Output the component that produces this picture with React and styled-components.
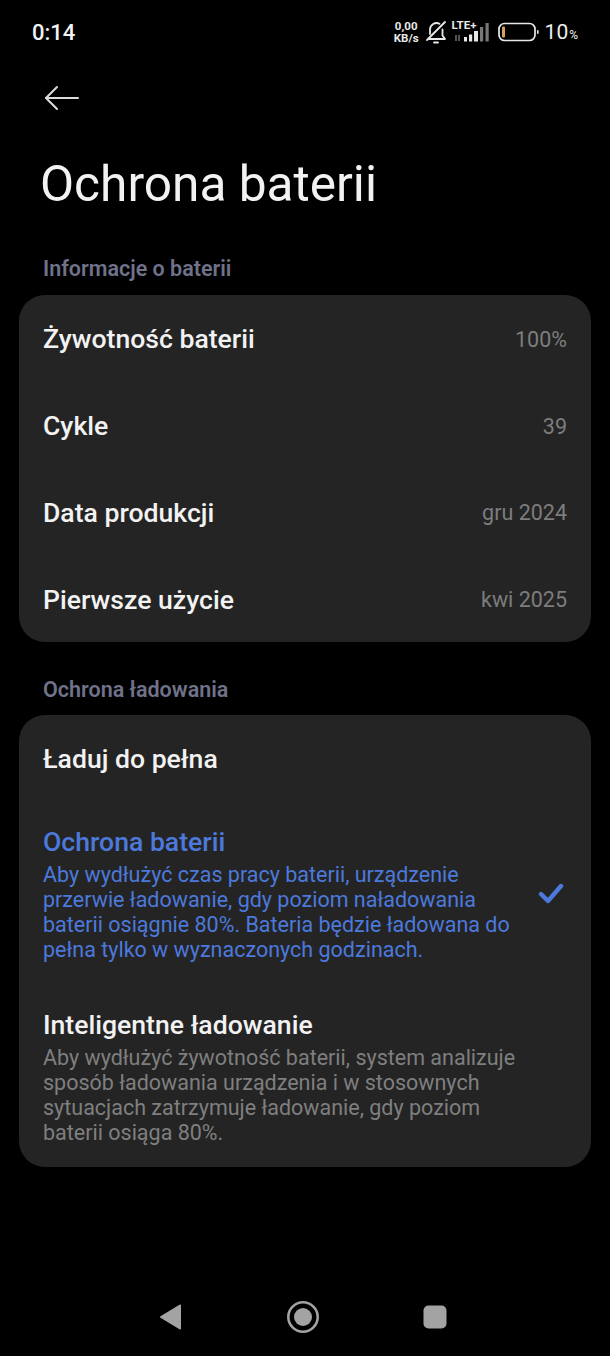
import React from 'react'
import styled, { createGlobalStyle } from 'styled-components'

const GlobalStyle = createGlobalStyle`
  html, body {
    margin: 0;
    padding: 0;
    background: #000;
  }
  * { box-sizing: border-box; }
`

const Page = styled.div`
  width: 610px;
  height: 1356px;
  background: #000;
  display: flex;
  flex-direction: column;
  font-family: Roboto, "Liberation Sans", sans-serif;
  overflow: hidden;
`

const StatusBar = styled.div`
  height: 64px;
  padding: 0 32px;
  display: flex;
  align-items: center;
  justify-content: space-between;
`

const Clock = styled.span`
  color: #f2f2f2;
  font-size: 22px;
  font-weight: 500;
`

const StatusIcons = styled.div`
  display: flex;
  align-items: center;
`

const NetSpeed = styled.div`
  color: #e8e8e8;
  font-size: 11.5px;
  line-height: 12px;
  font-weight: 700;
  text-align: center;
  margin-right: 6px;
`

const SignalBox = styled.div`
  position: relative;
  width: 42px;
  height: 22px;
  margin: 0 5px 0 4px;
`

const LteLabel = styled.span`
  position: absolute;
  left: 1px;
  top: -3px;
  color: #e8e8e8;
  font-size: 11.5px;
  font-weight: 700;
`

const BatteryPercent = styled.span`
  color: #eeeeee;
  font-size: 21px;
  margin-left: 6px;
  display: flex;
  align-items: baseline;
`

const PercentSign = styled.small`
  font-size: 12px;
  margin-left: 1px;
`

const BackButton = styled.div`
  height: 32px;
  margin: 18px 0 0 44px;
  display: flex;
  align-items: center;
`

const Title = styled.h1`
  margin: 42px 0 0 40px;
  color: #f2f2f2;
  font-size: 49.6px;
  line-height: 56px;
  font-weight: 400;
`

const SectionLabel = styled.div`
  margin: ${(props) => props.$top}px 0 0 43px;
  color: #6f7289;
  font-size: 21.5px;
  line-height: 26px;
  font-weight: 600;
`

const Card = styled.section`
  margin: ${(props) => props.$top}px 19px 0;
  background: #242424;
  border-radius: 26px;
`

const InfoRow = styled.div`
  height: 86.75px;
  padding: 2px 24px 0;
  display: flex;
  align-items: center;
  justify-content: space-between;
`

const RowLabel = styled.div`
  color: ${(props) => (props.$active ? '#4c79dc' : '#f2f2f2')};
  font-size: 26.6px;
  line-height: 32px;
  font-weight: 500;
`

const RowValue = styled.div`
  color: #7d7d7d;
  font-size: 21.5px;
`

const OptionRow = styled.div`
  display: flex;
  align-items: center;
  justify-content: space-between;
  padding: ${(props) => props.$pad};
`

const OptionText = styled.div`
  width: 478px;
`

const OptionDesc = styled.div`
  margin-top: 4px;
  color: ${(props) => (props.$active ? '#4c79dc' : '#7f7f7f')};
  font-size: 21.5px;
  line-height: 25px;
`

const NavBar = styled.div`
  margin-top: auto;
  height: 78px;
  padding-left: 158px;
  display: flex;
  align-items: center;
`

const NavIcon = styled.svg`
  display: block;
  margin-right: ${(props) => props.$gap}px;
  flex: none;
`

const infoRows = [
  ['Żywotność baterii', '100%'],
  ['Cykle', '39'],
  ['Data produkcji', 'gru 2024'],
  ['Pierwsze użycie', 'kwi 2025'],
]

export default function App() {
  return (
    <Page>
      <GlobalStyle />
      <StatusBar>
        <Clock>0:14</Clock>
        <StatusIcons>
          <NetSpeed>
            0,00
            <br />
            KB/s
          </NetSpeed>
          <svg width="22" height="24" viewBox="0 0 22 24" fill="none" stroke="#e8e8e8" strokeWidth="1.8" strokeLinecap="round" strokeLinejoin="round">
            <path d="M4 19h16l-2.5-3.5V9.5" />
            <path d="M5 14V9.5a6.5 6.5 0 0 1 9.5-5.7" />
            <path d="M2 20 20 2" />
            <path d="M9 22.5h4" />
          </svg>
          <SignalBox>
            <LteLabel>LTE+</LteLabel>
            <svg width="42" height="22" viewBox="0 0 42 22">
              <path d="M5 14v6M8 20v-6" stroke="#777" strokeWidth="1.4" />
              <rect x="13" y="16" width="3" height="4.5" fill="#e8e8e8" />
              <rect x="18" y="13.5" width="3.2" height="7" fill="#e8e8e8" />
              <rect x="23" y="10" width="4" height="10.5" fill="#e8e8e8" />
              <rect x="29" y="6" width="3.2" height="14.5" fill="#777" />
              <rect x="34.5" y="2" width="3.2" height="18.5" fill="#777" />
            </svg>
          </SignalBox>
          <svg width="41" height="20" viewBox="0 0 41 20">
            <rect x="1" y="1.5" width="36" height="17" rx="5.5" fill="none" stroke="#e8e8e8" strokeWidth="1.7" />
            <rect x="4" y="4.5" width="3" height="11" rx="1" fill="#d8a25a" />
            <rect x="39" y="8" width="1.6" height="4" rx="0.8" fill="#e8e8e8" />
          </svg>
          <BatteryPercent>
            10<PercentSign>%</PercentSign>
          </BatteryPercent>
        </StatusIcons>
      </StatusBar>

      <BackButton>
        <svg width="36" height="28" viewBox="0 0 36 28" fill="none" stroke="#dcdcdc" strokeWidth="2" strokeLinecap="round" strokeLinejoin="round">
          <path d="M2 14h32" />
          <path d="M13 3 2 14l11 11" />
        </svg>
      </BackButton>

      <Title>Ochrona baterii</Title>

      <SectionLabel $top={44}>Informacje o baterii</SectionLabel>
      <Card $top={13}>
        {infoRows.map(([label, value]) => (
          <InfoRow key={label}>
            <RowLabel>{label}</RowLabel>
            <RowValue>{value}</RowValue>
          </InfoRow>
        ))}
      </Card>

      <SectionLabel $top={35}>Ochrona ładowania</SectionLabel>
      <Card $top={12}>
        <OptionRow $pad="28px 24px 28px">
          <RowLabel>Ładuj do pełna</RowLabel>
        </OptionRow>
        <OptionRow $pad="23px 27px 23px 24px">
          <OptionText>
            <RowLabel $active>Ochrona baterii</RowLabel>
            <OptionDesc $active>
              Aby wydłużyć czas pracy baterii, urządzenie przerwie ładowanie, gdy poziom naładowania baterii
              osiągnie 80%. Bateria będzie ładowana do pełna tylko w wyznaczonych godzinach.
            </OptionDesc>
          </OptionText>
          <svg width="26" height="22" viewBox="0 0 26 22" fill="none" stroke="#4c79dc" strokeWidth="4.4" strokeLinecap="round" strokeLinejoin="round">
            <path d="M3 11l7 7L23 3" />
          </svg>
        </OptionRow>
        <OptionRow $pad="24px 24px 22px">
          <OptionText>
            <RowLabel>Inteligentne ładowanie</RowLabel>
            <OptionDesc>
              Aby wydłużyć żywotność baterii, system analizuje sposób ładowania urządzenia i w stosownych
              sytuacjach zatrzymuje ładowanie, gdy poziom baterii osiąga 80%.
            </OptionDesc>
          </OptionText>
        </OptionRow>
      </Card>

      <NavBar>
        <NavIcon $gap={105} width="24" height="28" viewBox="0 0 24 28">
          <path d="M22 2.5 3 14l19 11.5Z" fill="#a3a3a3" stroke="#a3a3a3" strokeWidth="2" strokeLinejoin="round" />
        </NavIcon>
        <NavIcon $gap={104} width="32" height="32" viewBox="0 0 32 32">
          <circle cx="16" cy="16" r="14.7" fill="none" stroke="#a3a3a3" strokeWidth="2.6" />
          <circle cx="16" cy="16" r="9" fill="#a3a3a3" />
        </NavIcon>
        <NavIcon $gap={0} width="24" height="24" viewBox="0 0 24 24">
          <rect x="0.5" y="0.5" width="23" height="23" rx="5" fill="#a3a3a3" />
        </NavIcon>
      </NavBar>
    </Page>
  )
}
